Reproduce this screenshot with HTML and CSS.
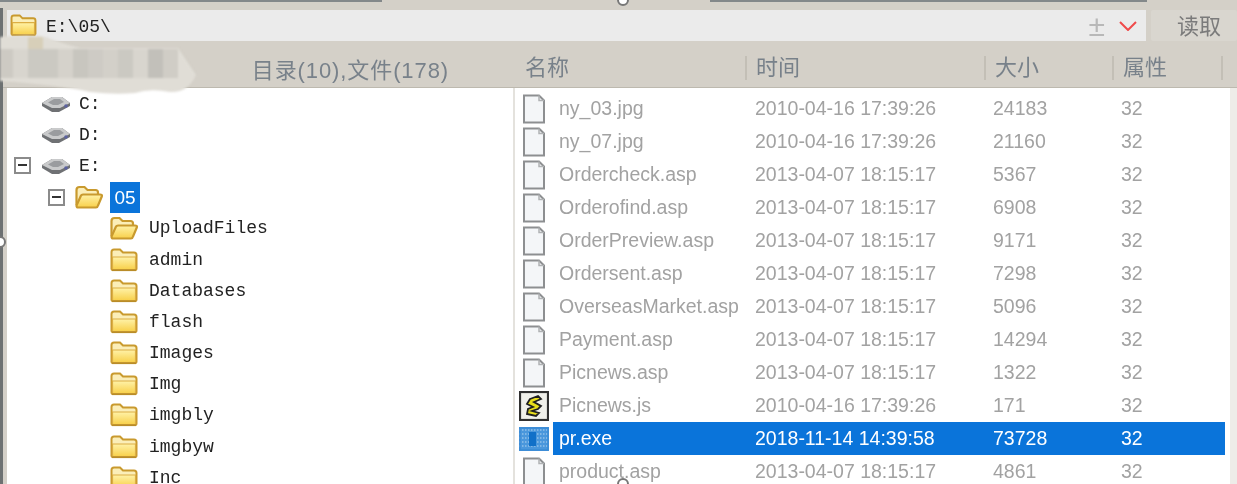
FILE: index.html
```html
<!DOCTYPE html>
<html lang="en">
<head>
  <meta charset="UTF-8">
  <title>文件管理</title>
  <link rel="stylesheet" href="styles.css">
</head>
<body>

  <svg class="icon-defs" aria-hidden="true">
    <defs>
      <linearGradient id="folderFill" x1="0" y1="0" x2="0" y2="1">
        <stop offset="0" stop-color="#fff2a8"/>
        <stop offset="1" stop-color="#f8d04a"/>
      </linearGradient>
    </defs>
    <symbol id="folderClosed" viewBox="0 0 28 24">
      <path d="M1.500 21V4q0-2.500 2.500-2.500h6l3 3h11q2.500 0 2.500 2.500v13.500q0 1.500-1.500 1.500H3q-1.500 0-1.500-1.500z" fill="#fbeeb8" stroke="#c99a2e" stroke-width="2"/>
      <path d="M2.500 9h23v12.500h-23z" fill="url(#folderFill)" stroke="#dcae44" stroke-width="1.200"/>
      <path d="M2 22.200h24" stroke="#b98c28" stroke-width="1.800"/>
    </symbol>
    <symbol id="folderOpen" viewBox="0 0 28 24">
      <path d="M1.500 20V5q0-3 3-3h5l3 3h8q2.500 0 2.500 2.500V11" fill="#fbeeb8" stroke="#c99a2e" stroke-width="2.200"/>
      <path d="M1.500 20.500 6 10.500q.5-1 2-1h17q2.500 0 1.800 2L23 20.500q-.5 2-2 2H3q-1.500 0-1.500-2z" fill="url(#folderFill)" stroke="#c99a2e" stroke-width="2.200"/>
    </symbol>
    <symbol id="disk" viewBox="0 0 30 18">
      <path d="M1 8 11 2h10l8 6v3l-11 6H11L1 11z" fill="#6f7174"/>
      <path d="M1 8 11 2h10l8 6-10 5h-8z" fill="#c9cacb"/>
      <path d="M7 7.500 13 4h6l4 3-6 3h-5z" fill="#9a9c9f"/>
      <circle cx="25" cy="11" r="1.800" fill="#5c62a0"/>
    </symbol>
    <symbol id="file" viewBox="0 0 24 30">
      <path d="M2 1.500h15l5 5v22H2z" fill="#f4f6f8" stroke="#8d8f91" stroke-width="2"/>
      <path d="M17 1.500v5h5" fill="none" stroke="#b0b2b4" stroke-width="1.500"/>
    </symbol>
    <symbol id="script" viewBox="0 0 30 30">
      <rect x="1" y="1" width="28" height="28" fill="#f0f0ea" stroke="#303030" stroke-width="2.200"/>
      <path d="M11 8l8-3 3 3-7 3 7 4-3 3-6 2 7 2-3 3-9-2 1-5 5-2-6-3z" fill="#e8de1c" stroke="#1f1f1f" stroke-width="1.800"/>
    </symbol>
    <symbol id="program" viewBox="0 0 30 24">
      <rect width="30" height="24" fill="#4a97dc"/>
      <path d="M0 3h30M0 7h30M0 11h30M0 15h30M0 19h30" stroke="#b5d5f0" stroke-width="1.200" stroke-dasharray="1.500 1.500"/>
      <rect x="10" y="5" width="7" height="14" fill="#1170c8"/>
      <rect x="1" y="1" width="28" height="22" fill="none" stroke="#3a8bd5" stroke-width="1.500"/>
    </symbol>
  </svg>

  <div class="window">
    <div class="top-edge">
      <span class="edge-dark edge-first"></span>
      <span class="edge-gap"></span>
      <span class="edge-dark edge-last"></span>
    </div>

    <div class="path-row">
      <div class="path-box">
        <svg class="path-icon"><use href="#folderClosed"/></svg>
        <span class="path-text">E:\05\</span>
        <span class="path-plus">±</span>
        <svg class="path-arrow" viewBox="0 0 18 10"><path d="M1 1l8 8 8-8" fill="none" stroke="#ef4a4a" stroke-width="2"/></svg>
      </div>
      <div class="read-btn">读取</div>
    </div>

    <div class="head-row">
      <div class="head-count">目录(10),文件(178)</div>
      <div class="head-col col-name">名称</div>
      <div class="head-col col-time">时间</div>
      <div class="head-col col-size">大小</div>
      <div class="head-col col-attr">属性</div>
    </div>

    <div class="body-row">
      <div class="tree">
        <div class="node depth-0"><span class="toggle off"></span><svg class="disk-icon"><use href="#disk"/></svg><span>C:</span></div>
        <div class="node depth-0"><span class="toggle off"></span><svg class="disk-icon"><use href="#disk"/></svg><span>D:</span></div>
        <div class="node depth-0"><span class="toggle"></span><svg class="disk-icon"><use href="#disk"/></svg><span>E:</span></div>
        <div class="node depth-1"><span class="toggle"></span><svg class="folder-icon"><use href="#folderOpen"/></svg><span class="node-current">05</span></div>
        <div class="node depth-2"><svg class="folder-icon"><use href="#folderOpen"/></svg><span>UploadFiles</span></div>
        <div class="node depth-2"><svg class="folder-icon"><use href="#folderClosed"/></svg><span>admin</span></div>
        <div class="node depth-2"><svg class="folder-icon"><use href="#folderClosed"/></svg><span>Databases</span></div>
        <div class="node depth-2"><svg class="folder-icon"><use href="#folderClosed"/></svg><span>flash</span></div>
        <div class="node depth-2"><svg class="folder-icon"><use href="#folderClosed"/></svg><span>Images</span></div>
        <div class="node depth-2"><svg class="folder-icon"><use href="#folderClosed"/></svg><span>Img</span></div>
        <div class="node depth-2"><svg class="folder-icon"><use href="#folderClosed"/></svg><span>imgbly</span></div>
        <div class="node depth-2"><svg class="folder-icon"><use href="#folderClosed"/></svg><span>imgbyw</span></div>
        <div class="node depth-2 node-last"><svg class="folder-icon"><use href="#folderClosed"/></svg><span>Inc</span></div>
      </div>

      <div class="files">
        <div class="file"><svg class="file-icon"><use href="#file"/></svg><div class="cells"><span class="cell-name">ny_03.jpg</span><span class="cell-time">2010-04-16 17:39:26</span><span class="cell-size">24183</span><span>32</span></div></div>
        <div class="file"><svg class="file-icon"><use href="#file"/></svg><div class="cells"><span class="cell-name">ny_07.jpg</span><span class="cell-time">2010-04-16 17:39:26</span><span class="cell-size">21160</span><span>32</span></div></div>
        <div class="file"><svg class="file-icon"><use href="#file"/></svg><div class="cells"><span class="cell-name">Ordercheck.asp</span><span class="cell-time">2013-04-07 18:15:17</span><span class="cell-size">5367</span><span>32</span></div></div>
        <div class="file"><svg class="file-icon"><use href="#file"/></svg><div class="cells"><span class="cell-name">Orderofind.asp</span><span class="cell-time">2013-04-07 18:15:17</span><span class="cell-size">6908</span><span>32</span></div></div>
        <div class="file"><svg class="file-icon"><use href="#file"/></svg><div class="cells"><span class="cell-name">OrderPreview.asp</span><span class="cell-time">2013-04-07 18:15:17</span><span class="cell-size">9171</span><span>32</span></div></div>
        <div class="file"><svg class="file-icon"><use href="#file"/></svg><div class="cells"><span class="cell-name">Ordersent.asp</span><span class="cell-time">2013-04-07 18:15:17</span><span class="cell-size">7298</span><span>32</span></div></div>
        <div class="file"><svg class="file-icon"><use href="#file"/></svg><div class="cells"><span class="cell-name">OverseasMarket.asp</span><span class="cell-time">2013-04-07 18:15:17</span><span class="cell-size">5096</span><span>32</span></div></div>
        <div class="file"><svg class="file-icon"><use href="#file"/></svg><div class="cells"><span class="cell-name">Payment.asp</span><span class="cell-time">2013-04-07 18:15:17</span><span class="cell-size">14294</span><span>32</span></div></div>
        <div class="file"><svg class="file-icon"><use href="#file"/></svg><div class="cells"><span class="cell-name">Picnews.asp</span><span class="cell-time">2013-04-07 18:15:17</span><span class="cell-size">1322</span><span>32</span></div></div>
        <div class="file"><svg class="file-icon wide"><use href="#script"/></svg><div class="cells"><span class="cell-name">Picnews.js</span><span class="cell-time">2010-04-16 17:39:26</span><span class="cell-size">171</span><span>32</span></div></div>
        <div class="file"><svg class="file-icon wide"><use href="#program"/></svg><div class="cells selected"><span class="cell-name">pr.exe</span><span class="cell-time">2018-11-14 14:39:58</span><span class="cell-size">73728</span><span>32</span></div></div>
        <div class="file"><svg class="file-icon"><use href="#file"/></svg><div class="cells"><span class="cell-name">product.asp</span><span class="cell-time">2013-04-07 18:15:17</span><span class="cell-size">4861</span><span>32</span></div></div>
      </div>

      <div class="side-strip"></div>
    </div>

    <!-- smeared out area over the top left corner -->
    <svg class="smear" viewBox="0 0 196 60">
      <path d="M0 2Q30-1 46 2 60 8 80 13H178L196 40Q188 58 170 57 150 53 135 58 115 60 90 57 60 50 0 46z" fill="#e0ddd6"/>
      <rect x="0" y="14" width="178" height="29" fill="#d8d5ce"/>
      <g fill="#cdcac3">
        <rect x="0" y="14" width="13" height="29"/>
        <rect x="28" y="14" width="30" height="29" fill="#cbc9c2"/>
        <rect x="58" y="14" width="15" height="29" fill="#d5d2cb"/>
        <rect x="73" y="14" width="15" height="29" fill="#c8c6bf"/>
        <rect x="88" y="14" width="15" height="29" fill="#cecbc5"/>
        <rect x="103" y="14" width="15" height="29" fill="#d3d0c9"/>
        <rect x="118" y="14" width="15" height="29" fill="#cbc9c2"/>
        <rect x="148" y="14" width="15" height="29" fill="#c2c0ba"/>
        <rect x="163" y="14" width="15" height="29" fill="#d0cdc6"/>
      </g>
      <rect x="28" y="2" width="15" height="12" fill="#d7cfb9"/>
    </svg>

    <span class="handle handle-top"></span>
    <span class="handle handle-left"></span>
    <span class="handle handle-bottom"></span>
  </div>

</body>
</html>
```

FILE: styles.css
```css
body {
  margin: 0;
  overflow: hidden;
  background: #d4d0c8;
}

.icon-defs {
  position: absolute;
  width: 0;
  height: 0;
}

.window {
  position: relative;
  width: 1237px;
  height: 484px;
  overflow: hidden;
  background: #d4d0c8;
  font-family: "Liberation Sans", "Noto Sans CJK SC", sans-serif;
  filter: blur(0.5px);
}

.window::before {
  content: "";
  position: absolute;
  left: 0;
  top: 8px;
  bottom: 0;
  width: 3px;
  background: #6d7172;
}

/* top strip */
.top-edge {
  display: flex;
  height: 10px;
  align-items: flex-start;
}

.edge-dark {
  height: 2px;
  background: #83888a;
}

.edge-first {
  width: 382px;
}

.edge-gap {
  width: 328px;
}

.edge-last {
  width: 437px;
}

/* path row */
.path-row {
  display: flex;
  height: 32px;
  padding-left: 7px;
  gap: 5px;
}

.path-box {
  flex: 1;
  display: flex;
  align-items: center;
  background: #ebebeb;
  padding-left: 3px;
  margin-bottom: 1px;
}

.path-icon {
  width: 27px;
  height: 23px;
  flex: none;
}

.path-text {
  flex: 1;
  margin-left: 9px;
  margin-top: 3px;
  font-family: "Liberation Mono", monospace;
  font-size: 18px;
  color: #222;
}

.path-plus {
  font-size: 30px;
  line-height: 30px;
  color: #b8b8b8;
  margin-right: 14px;
}

.path-arrow {
  width: 18px;
  height: 10px;
  margin-right: 9px;
}

.read-btn {
  box-sizing: border-box;
  width: 86px;
  height: 31px;
  padding-left: 10px;
  line-height: 34px;
  font-size: 22px;
  text-align: center;
  color: #7b7b7b;
  background: #d9d6cf;
  border-radius: 2px;
}

/* column heads */
.head-row {
  display: flex;
  height: 46px;
  padding-top: 6px;
  align-items: center;
  border-bottom: 1px solid #bdb9af;
  box-sizing: border-box;
  font-size: 22px;
  color: #78818a;
}

.head-count {
  width: 449px;
  text-align: right;
  flex: none;
  letter-spacing: 0.9px;
  margin-right: 76px;
}

.head-col {
  box-sizing: border-box;
  height: 24px;
  line-height: 24px;
  border-right: 2px solid #c3bfb6;
  flex: none;
}

.col-name {
  width: 222px;
}

.col-time {
  width: 239px;
  padding-left: 9px;
}

.col-size {
  width: 128px;
  padding-left: 9px;
}

.col-attr {
  width: 109px;
  padding-left: 9px;
}

/* tree and file list */
.body-row {
  display: flex;
  height: 396px;
  margin-left: 7px;
  background: #fff;
}

.tree {
  width: 508px;
  flex: none;
  border-right: 2px solid #e4e2dd;
  box-sizing: border-box;
  font-family: "Liberation Mono", monospace;
  font-size: 18px;
  color: #222;
}

.node {
  display: flex;
  align-items: center;
  height: 31.2px;
}

.node-last {
  line-height: 14px;
}

.depth-0 {
  padding-left: 7px;
}

.depth-1 {
  padding-left: 41px;
}

.depth-2 {
  padding-left: 103px;
}

.toggle {
  position: relative;
  box-sizing: border-box;
  width: 17px;
  height: 17px;
  margin-right: 10px;
  border: 2px solid #8b8b8b;
  flex: none;
}

.toggle::after {
  content: "";
  position: absolute;
  left: 2px;
  right: 2px;
  top: 5px;
  height: 2px;
  background: #333;
}

.toggle.off {
  visibility: hidden;
}

.disk-icon {
  width: 30px;
  height: 18px;
  margin-right: 8px;
  flex: none;
}

.folder-icon {
  width: 28px;
  height: 24px;
  margin-right: 7px;
  flex: none;
}

.depth-2 .folder-icon {
  margin-right: 11px;
}

.node-current {
  width: 30px;
  height: 31px;
  line-height: 31px;
  text-align: center;
  color: #fff;
  background: #0a74da;
  font-family: "Liberation Sans", sans-serif;
  font-size: 19px;
}

.files {
  flex: 1;
  padding-top: 4px;
  font-size: 19.5px;
  color: #a2a2a2;
}

.file {
  display: flex;
  align-items: center;
  height: 33px;
}

.file-icon {
  width: 24px;
  height: 30px;
  margin-left: 7px;
  margin-right: 7px;
  flex: none;
}

.file-icon.wide {
  width: 30px;
  height: 30px;
  margin-left: 4px;
  margin-right: 4px;
}

.cells {
  display: flex;
  align-items: center;
  width: 672px;
  height: 33px;
  flex: none;
}

.cells.selected {
  background: #0a74da;
  color: #fff;
}

.cell-name {
  box-sizing: border-box;
  width: 202px;
  padding-left: 6px;
  white-space: nowrap;
}

.cell-time {
  width: 238px;
}

.cell-size {
  width: 128px;
}

.side-strip {
  width: 7px;
  flex: none;
  background: #eeece8;
}

/* overlays */
.smear {
  position: absolute;
  left: 0;
  top: 35px;
  width: 196px;
  height: 60px;
  filter: blur(1px);
}

.handle {
  position: absolute;
  box-sizing: border-box;
  width: 12px;
  height: 12px;
  border: 2px solid #777;
  border-radius: 50%;
  background: #fff;
}

.handle-top {
  left: 617px;
  top: -6px;
}

.handle-left {
  left: -6px;
  top: 236px;
}

.handle-bottom {
  left: 617px;
  top: 478px;
}
```
